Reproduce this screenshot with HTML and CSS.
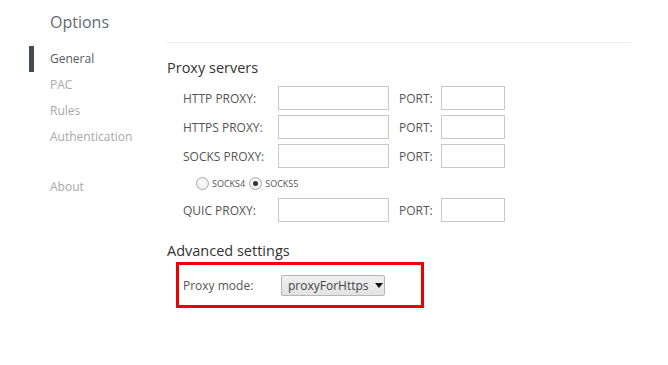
FILE: index.html
```html
<!DOCTYPE html>
<html>
<head>
<meta charset="utf-8">
<link rel="stylesheet" href="styles.css">
</head>
<body>
<div class="page">
  <aside class="sidebar">
    <h1 class="title">Options</h1>
    <nav class="nav">
      <a class="nav-item active">General</a>
      <a class="nav-item">PAC</a>
      <a class="nav-item">Rules</a>
      <a class="nav-item">Authentication</a>
      <a class="nav-item about">About</a>
    </nav>
  </aside>
  <main class="content">
    <div class="divider"></div>
    <h2 class="section-title">Proxy servers</h2>
    <div class="rows">
      <div class="row">
        <span class="label">HTTP PROXY:</span>
        <span class="input host"></span>
        <span class="port-label">PORT:</span>
        <span class="input port"></span>
      </div>
      <div class="row">
        <span class="label">HTTPS PROXY:</span>
        <span class="input host"></span>
        <span class="port-label">PORT:</span>
        <span class="input port"></span>
      </div>
      <div class="row">
        <span class="label">SOCKS PROXY:</span>
        <span class="input host"></span>
        <span class="port-label">PORT:</span>
        <span class="input port"></span>
      </div>
      <div class="radios">
        <span class="radio"></span><span class="radio-label">SOCKS4</span>
        <span class="radio checked"></span><span class="radio-label">SOCKS5</span>
      </div>
      <div class="row">
        <span class="label">QUIC PROXY:</span>
        <span class="input host"></span>
        <span class="port-label">PORT:</span>
        <span class="input port"></span>
      </div>
    </div>
    <h2 class="section-title advanced">Advanced settings</h2>
    <div class="highlight">
      <span class="mode-label">Proxy mode:</span>
      <span class="select">proxyForHttps<span class="caret"></span></span>
    </div>
  </main>
</div>
</body>
</html>
```

FILE: styles.css
```css
html, body {
  margin: 0;
  padding: 0;
  background: #ffffff;
}
body {
  font-family: "Open Sans", "Noto Sans", "DejaVu Sans", sans-serif;
  color: #4a4a4a;
  width: 668px;
  height: 365px;
  overflow: hidden;
}
.page {
  display: flex;
}
.sidebar {
  width: 166px;
  flex: none;
}
.title {
  margin: 0;
  padding: 12px 0 0 50px;
  font-size: 16px;
  line-height: 20px;
  font-weight: normal;
  color: #666a70;
  height: 34px;
}
.nav {
  display: flex;
  flex-direction: column;
}
.nav-item {
  display: block;
  height: 26px;
  line-height: 26px;
  padding-left: 50px;
  font-size: 12px;
  color: #a8a8a8;
  position: relative;
}
.nav-item.active {
  color: #555a60;
}
.nav-item.active::before {
  content: "";
  position: absolute;
  left: 29px;
  top: 0;
  width: 5px;
  height: 26px;
  background: #454a55;
}
.nav-item.about {
  margin-top: 24px;
}
.content {
  width: 465px;
  flex: none;
}
.divider {
  margin-top: 42px;
  height: 1px;
  background: #ececec;
}
.section-title {
  margin: 0;
  padding-left: 1px;
  font-size: 14.5px;
  line-height: 20px;
  font-weight: normal;
  color: #333;
  margin-top: 15px;
}
.rows {
  margin-top: 8px;
  padding-left: 17px;
  display: flex;
  flex-direction: column;
  gap: 5px;
}
.row {
  display: flex;
  align-items: center;
  height: 24px;
}
.label {
  width: 95px;
  font-size: 12px;
  color: #555;
}
.input {
  box-sizing: border-box;
  height: 24px;
  border: 1px solid #c8c8c8;
  background: #fff;
}
.input.host {
  width: 111px;
}
.port-label {
  margin-left: 10px;
  width: 42px;
  font-size: 12px;
  color: #555;
}
.input.port {
  width: 64px;
}
.radios {
  display: flex;
  align-items: center;
  height: 20px;
  margin-left: 13px;
}
.radio {
  box-sizing: border-box;
  width: 13px;
  height: 13px;
  border-radius: 50%;
  border: 1px solid #a9a9a9;
  background: radial-gradient(circle at 50% 40%, #ffffff 0%, #e6e6e6 100%);
  position: relative;
}
.radio.checked::after {
  content: "";
  position: absolute;
  left: 3px;
  top: 3px;
  width: 5px;
  height: 5px;
  border-radius: 50%;
  background: #333;
}
.radio-label {
  font-size: 9px;
  color: #555;
  margin: 1px 4px 0 3px;
}
.advanced {
  margin-top: 19px;
}
.highlight {
  box-sizing: border-box;
  margin-left: 10px;
  margin-top: 1px;
  width: 248px;
  height: 46px;
  border: 3px solid #ee0000;
  display: flex;
  align-items: center;
  padding-left: 4px;
}
.mode-label {
  width: 98px;
  font-size: 12px;
  color: #555;
}
.select {
  box-sizing: border-box;
  display: flex;
  align-items: center;
  height: 21px;
  width: 104px;
  padding-left: 6px;
  font-size: 12px;
  color: #444;
  border: 1px solid #b5b5b5;
  border-radius: 2px;
  background: linear-gradient(#f0f0f0, #e3e3e3);
}
.caret {
  margin-left: 6px;
  width: 0;
  height: 0;
  border-left: 4px solid transparent;
  border-right: 4px solid transparent;
  border-top: 5px solid #111;
}
```
